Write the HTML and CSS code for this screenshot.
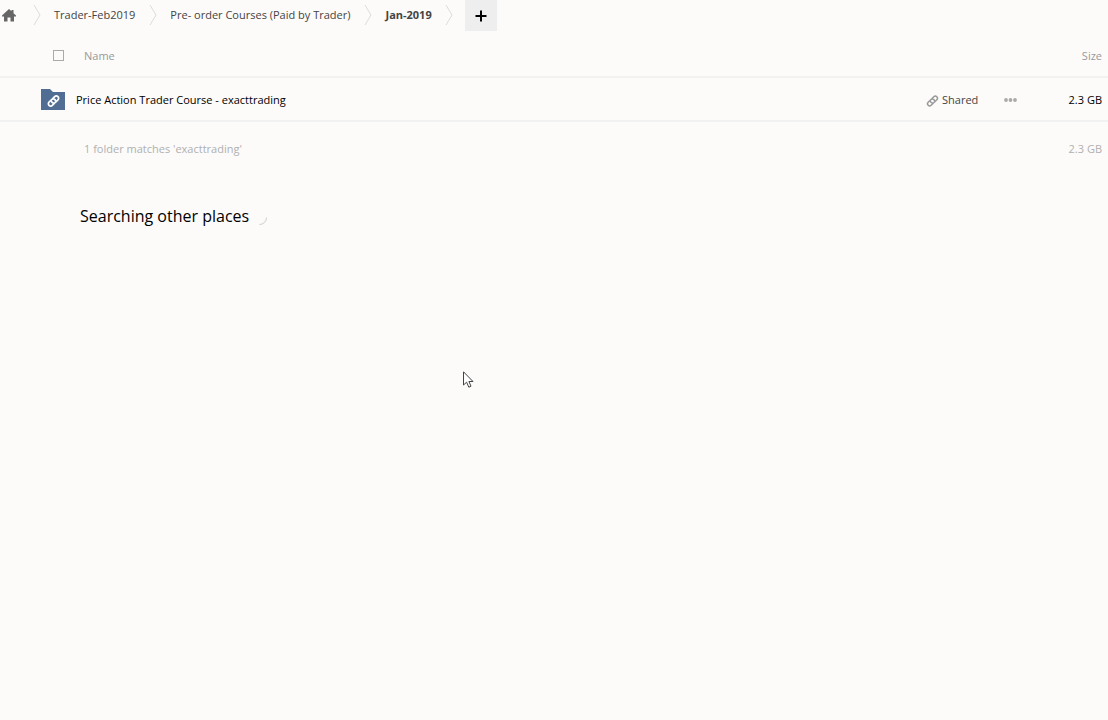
FILE: index.html
```html
<!DOCTYPE html>
<html lang="en">
<head>
<meta charset="utf-8">
<meta name="viewport" content="width=device-width, initial-scale=1">
<title>Files</title>
<link rel="stylesheet" href="styles.css">
</head>
<body>
<nav class="toolbar" aria-label="Breadcrumb">
  <ol class="crumbs">
    <li class="crumb crumb-home"><a href="#" aria-label="Home"><svg class="icon" width="14" height="13" viewBox="0 0 14 13"><path fill="#666" d="M7 0 9.5 2.3V1H11.500V4.200L14 6.600V7.500H12V12.500H8.500V8.500H5.500V12.500H2V7.500H0V6.600Z"/></svg></a></li>
    <li class="crumb"><svg class="chevron" width="8" height="20" viewBox="0 0 8 20"><path d="M1 0 7 10 1 20"/></svg><a href="#">Trader-Feb2019</a></li>
    <li class="crumb"><svg class="chevron" width="8" height="20" viewBox="0 0 8 20"><path d="M1 0 7 10 1 20"/></svg><a href="#">Pre- order Courses (Paid by Trader)</a></li>
    <li class="crumb crumb-current"><svg class="chevron" width="8" height="20" viewBox="0 0 8 20"><path d="M1 0 7 10 1 20"/></svg><a href="#">Jan-2019</a><svg class="chevron" width="8" height="20" viewBox="0 0 8 20"><path d="M1 0 7 10 1 20"/></svg></li>
  </ol>
  <button class="add" type="button" aria-label="New"><svg class="icon" width="12" height="12" viewBox="0 0 12 12"><path d="M6 0.500V11.500M0.500 6H11.500" stroke="#000" stroke-width="2"/></svg></button>
</nav>
<main>
  <table class="files">
    <thead>
      <tr>
        <th class="pick"><input class="check" type="checkbox" id="all" aria-label="Select all"></th>
        <th class="name"><label for="all">Name</label></th>
        <th class="share"></th>
        <th class="more"></th>
        <th class="size">Size</th>
      </tr>
    </thead>
    <tbody>
      <tr>
        <td class="name" colspan="2">
          <a class="file" href="#">
            <svg class="icon" width="24" height="21" viewBox="0 0 24 21"><path fill="#526d94" d="M0 0H9L12 3H24V21H0Z"/><g transform="translate(12.500 12) rotate(-45)" fill="none" stroke="#fff" stroke-width="1.700" stroke-linecap="round"><path d="M-1.500 2.300H-4A2.300 2.300 0 0 1 -4 -2.300H0A2.300 2.300 0 0 1 1.600 1.200"/><path d="M1.500 -2.300H4A2.300 2.300 0 0 1 4 2.300H0A2.300 2.300 0 0 1 -1.600 -1.200"/></g></svg>
            <span>Price Action Trader Course - exacttrading</span>
          </a>
        </td>
        <td class="share"><button class="action" type="button"><svg class="icon link" width="13" height="14" viewBox="0 0 13 14"><g transform="translate(6.500 8) rotate(-45)" fill="none" stroke="#999" stroke-width="1.500" stroke-linecap="round"><path d="M-1.500 2.100H-4A2.100 2.100 0 0 1 -4 -2.100H0A2.100 2.100 0 0 1 1.600 1.200"/><path d="M1.500 -2.100H4A2.100 2.100 0 0 1 4 2.100H0A2.100 2.100 0 0 1 -1.600 -1.200"/></g></svg><span>Shared</span></button></td>
        <td class="more"><button class="action" type="button" aria-label="More actions"><svg class="icon" width="13" height="4" viewBox="0 0 13 4"><g fill="#aaa"><circle cx="2" cy="2" r="1.900"/><circle cx="6.500" cy="2" r="1.900"/><circle cx="11" cy="2" r="1.900"/></g></svg></button></td>
        <td class="size">2.3 GB</td>
      </tr>
    </tbody>
    <tfoot>
      <tr>
        <td class="pick"></td>
        <td class="name" colspan="3">1 folder matches 'exacttrading'</td>
        <td class="size">2.3 GB</td>
      </tr>
    </tfoot>
  </table>
  <section class="searching" aria-live="polite">
    <h2 class="searching-title">Searching other places</h2>
    <svg class="spinner" width="8" height="8" viewBox="0 0 8 8"><path d="M7.500 0.500A7 7 0 0 1 0.500 7.500" fill="none" stroke="#ccc"/></svg>
  </section>
</main>
<svg class="pointer" width="11" height="18" viewBox="0 0 11 18" aria-hidden="true"><path d="M.5 .8V14L3.600 11.200 5.800 16.200 8 15.200 5.900 10.500H10Z" fill="#fff" stroke="#444"/></svg>
</body>
</html>
```
FILE: styles.css
```css
* {
  box-sizing: border-box;
}

body {
  margin: 0;
  background: #fcfbfa;
  color: #000;
  font: 11px/20px "Open Sans", "Noto Sans", sans-serif;
}

a {
  color: inherit;
  text-decoration: none;
}

button {
  padding: 0;
  border: 0;
  background: none;
  color: inherit;
  font: inherit;
}

.icon {
  display: block;
  flex: none;
}

.toolbar,
.crumbs,
.crumb {
  display: flex;
  align-items: center;
}

.toolbar {
  height: 31px;
  gap: 12px;
  padding-left: 2px;
}

.crumbs {
  gap: 14px;
  margin: 0;
  padding: 0 0 1px;
  list-style: none;
  color: #444;
}

.crumb {
  gap: 13px;
  white-space: nowrap;
}

.crumb-home {
  padding-right: 3px;
}

.crumb-current {
  font-weight: 700;
}

.chevron {
  flex: none;
  fill: none;
  stroke: #ddd;
}

.add {
  display: flex;
  align-items: center;
  justify-content: center;
  width: 32px;
  height: 31px;
  background: #eee;
}

.files {
  width: 100%;
  border-collapse: collapse;
  table-layout: fixed;
}

.files th,
.files td {
  height: 44px;
  padding: 1px 0 0;
  text-align: left;
  font-weight: 400;
  vertical-align: middle;
}

.files thead {
  color: #999;
}

.files thead th {
  height: 46px;
  padding-top: 4px;
  border-bottom: 2px solid #f2f2f2;
}

.files tbody td {
  border-bottom: 2px solid #f2f2f2;
}

.files tfoot {
  color: #b0b0b0;
}

.files tfoot td {
  height: 53px;
}

.files .pick {
  width: 84px;
  padding-left: 53px;
}

.files .share {
  width: 78px;
  color: #444;
}

.files .more {
  width: 54px;
}

.files .size {
  width: 50px;
  padding-right: 6px;
  text-align: right;
}

.check {
  display: block;
  appearance: none;
  width: 11px;
  height: 11px;
  margin: 0;
  border: 1px solid #aaa;
}

.file {
  display: flex;
  align-items: center;
  gap: 11px;
  padding-left: 41px;
}

.action {
  display: flex;
  align-items: center;
  gap: 3px;
}

.searching {
  display: flex;
  align-items: flex-end;
  gap: 10px;
  padding: 30px 80px;
}

.searching-title {
  margin: 0;
  font-size: 16px;
  font-weight: 400;
  line-height: 24px;
}

.spinner {
  margin-bottom: 3px;
}

.pointer {
  position: absolute;
  left: 463px;
  top: 371px;
}
```
